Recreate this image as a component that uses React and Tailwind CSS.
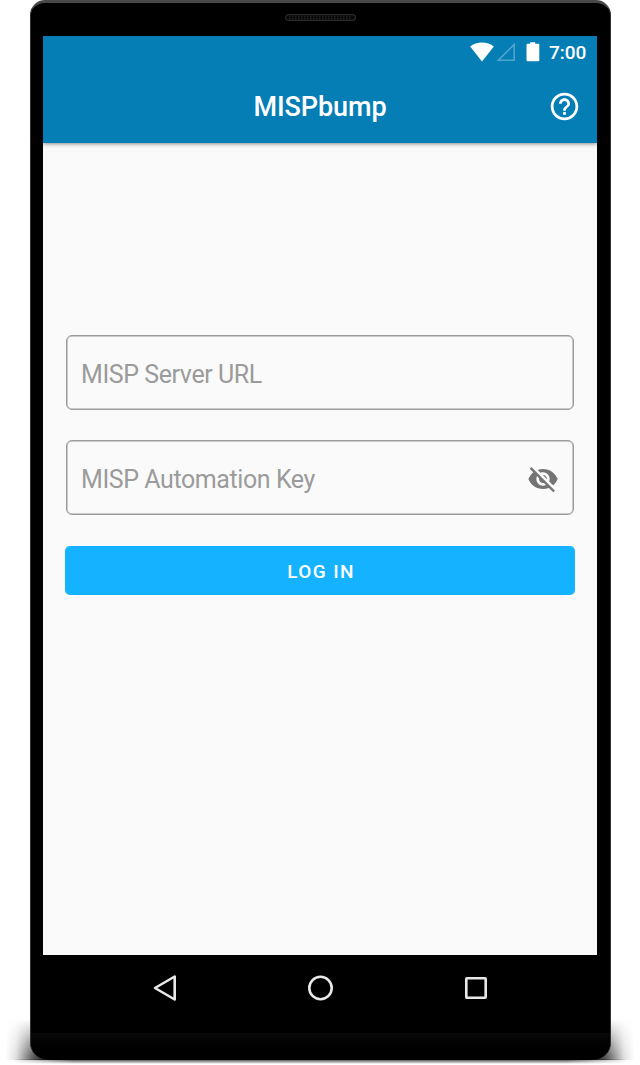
import { MdHelpOutline, MdVisibilityOff } from 'react-icons/md';

function StatusBar() {
  return (
    <div className="flex h-8 items-center justify-end pr-[10px] text-white">
      <svg width="24" height="20" viewBox="0 0 24 20" className="shrink-0">
        <path d="M0.200 4.600C3.400 2 7.500 0.500 12 0.500s8.600 1.500 11.800 4.100L12 19.400z" fill="currentColor" />
      </svg>
      <svg width="20" height="20" viewBox="0 0 20 20" className="ml-[2px] shrink-0">
        <path d="M18.200 2.400V18.300H2.300z" fill="none" stroke="#fff" strokeOpacity="0.300" strokeWidth="1.600" />
      </svg>
      <svg width="14" height="20" viewBox="0 0 14 20" className="ml-[10px] shrink-0">
        <path d="M4.200 0.200h5v1.500h3.100q1 0 1 1v15.600q0 1-1 1H1.500q-1 0-1-1v-15.600q0-1 1-1h2.700z" fill="currentColor" />
      </svg>
      <span className="ml-[9px] w-[38px] whitespace-nowrap pt-px text-[19px] font-medium leading-8">7:00</span>
    </div>
  );
}

function AppBar() {
  return (
    <header className="relative z-10 h-[107px] shrink-0 bg-[#057eb6] text-white shadow-[0_1px_4px_rgba(0,0,0,0.45)]">
      <StatusBar />
      <div className="grid grid-cols-[1fr_auto_1fr] items-center pt-[17px]">
        <span />
        <h1 className="pt-px text-[27px] font-medium leading-[42px] tracking-[-0.100px]">MISPbump</h1>
        <button type="button" aria-label="Help" className="mr-4 justify-self-end">
          <MdHelpOutline size={33} />
        </button>
      </div>
    </header>
  );
}

function Field({ label, children }) {
  return (
    <div className="flex h-[75px] items-center justify-between rounded-[6px] border border-[#9b9b9b] px-[14px] pt-[3px] text-[#9b9b9b] shadow-[inset_0_0_0_0.500px_#9b9b9b]">
      <span className="pt-[2px] text-[25px] leading-8 tracking-[-0.420px]">{label}</span>
      {children}
    </div>
  );
}

function NavBar() {
  return (
    <nav className="flex h-[65px] items-center justify-between px-[109px]">
      <svg width="26" height="30" viewBox="0 0 26 30">
        <path d="M3 15L22.700 3.500V26.500z" fill="none" stroke="#e8e8e8" strokeWidth="2.600" strokeLinejoin="round" />
      </svg>
      <svg width="28" height="30" viewBox="0 0 28 30">
        <circle cx="13.500" cy="15" r="11.200" fill="none" stroke="#e8e8e8" strokeWidth="2.600" />
      </svg>
      <svg width="24" height="30" viewBox="0 0 24 30">
        <rect x="2.300" y="5.200" width="19.400" height="19.600" rx="0.800" fill="none" stroke="#e8e8e8" strokeWidth="2.600" />
      </svg>
    </nav>
  );
}

export default function App() {
  return (
    <div className="relative h-[1065px] w-[640px] overflow-hidden bg-white font-['Roboto',sans-serif]">
      <div className="absolute inset-x-[6px] top-[1019px] h-[41px] mask-t-from-[10%] mask-t-to-100%">
        <div className="h-full bg-[linear-gradient(to_right,transparent,rgba(0,0,0,0.120)_10px,rgba(0,0,0,0.600)_26px,#000_44px,#000_calc(100%-44px),rgba(0,0,0,0.600)_calc(100%-26px),rgba(0,0,0,0.120)_calc(100%-10px),transparent)]" />
      </div>
      <div className="absolute inset-x-[12px] top-[1059px] h-[5px] mask-x-from-90% mask-x-to-100% bg-linear-to-b from-black/80 to-transparent" />
      <div className="relative mx-auto flex h-[1059px] w-[581px] flex-col overflow-hidden rounded-b-[16px] rounded-t-[15px] border-x border-t-[3px] border-x-[#333] border-t-[#484848] bg-black px-[12.500px]">
        <div className="flex h-[33px] shrink-0 justify-center pt-[11px]">
          <svg width="71" height="7" viewBox="0 0 71 7">
            <rect x="0.600" y="0.600" width="69.800" height="5.800" rx="2.900" fill="#080808" stroke="#2b2b2b" strokeWidth="1.200" />
            <path d="M4 2.600H67M4 4.600H67" stroke="#222" strokeWidth="1.200" strokeDasharray="1.500 1.500" />
          </svg>
        </div>
        <div className="flex h-[919px] shrink-0 flex-col bg-[#fafafa]">
          <AppBar />
          <main className="flex flex-col px-[22px] pt-[192px]">
            <div className="flex flex-col gap-[29.500px] px-[1px]">
              <Field label="MISP Server URL" />
              <Field label="MISP Automation Key">
                <MdVisibilityOff size={32} className="text-[#747474]" />
              </Field>
            </div>
            <button type="button" className="mt-[31.500px] h-[49px] rounded-[5px] bg-[#14b2ff] pl-[2px] pt-[3px] text-[19px] font-medium tracking-[1.400px] text-white">
              LOG IN
            </button>
          </main>
        </div>
        <NavBar />
        <div className="-mx-[12.500px] flex-1 pt-[13px]">
          <div className="h-full bg-linear-to-b from-[#090909] to-black" />
        </div>
      </div>
    </div>
  );
}
